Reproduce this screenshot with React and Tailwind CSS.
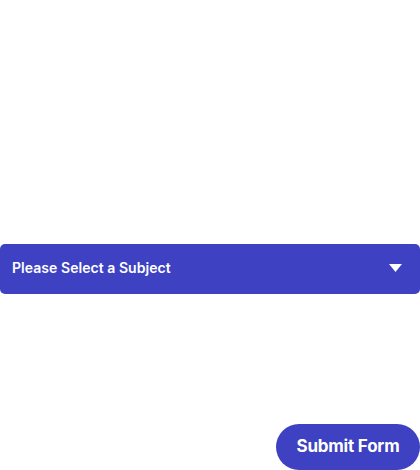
import React, { useState } from 'react';

const App = () => {
  const [subject, setSubject] = useState('');

  return (
    <div className="w-[420px] h-[470px] bg-white flex flex-col" style={{ fontFamily: 'Inter, "Noto Sans", sans-serif' }}>
      <div className="h-[244px]" />
      <button
        type="button"
        onClick={() => setSubject(subject)}
        className="h-[50px] w-full bg-[#3d41c2] rounded-[5px] flex items-center justify-between pl-3 pr-[18px] pb-[3px] text-white"
      >
        <span className="text-[14px] font-semibold tracking-[0.05px]">Please Select a Subject</span>
        <svg width="13" height="8" viewBox="0 0 13 8" className="mt-[1px]">
          <polygon points="0,0 13,0 6.5,8" fill="white" />
        </svg>
      </button>
      <div className="h-[130px]" />
      <div className="flex justify-end">
        <button
          type="submit"
          className="h-[46px] w-[144px] bg-[#3d41c2] rounded-full text-white text-[17px] font-bold tracking-[-0.2px]"
        >
          Submit Form
        </button>
      </div>
    </div>
  );
};

export default App;
